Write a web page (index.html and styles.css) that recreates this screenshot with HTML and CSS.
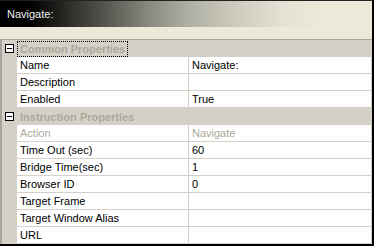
FILE: index.html
```html
<!DOCTYPE html>
<html>
<head>
<meta charset="utf-8">
<link rel="stylesheet" href="styles.css">
</head>
<body>
<div class="panel">
  <div class="header">Navigate:</div>
  <div class="band"></div>
  <div class="grid">
    <div class="cat">
      <div class="gutter"><span class="toggle"></span></div>
      <span class="cat-label focus">Common Properties</span>
    </div>
    <div class="row"><div class="gutter"></div><div class="name">Name</div><div class="value">Navigate:</div></div>
    <div class="row"><div class="gutter"></div><div class="name">Description</div><div class="value"></div></div>
    <div class="row"><div class="gutter"></div><div class="name">Enabled</div><div class="value">True</div></div>
    <div class="cat">
      <div class="gutter"><span class="toggle"></span></div>
      <span class="cat-label">Instruction Properties</span>
    </div>
    <div class="row disabled"><div class="gutter"></div><div class="name">Action</div><div class="value">Navigate</div></div>
    <div class="row"><div class="gutter"></div><div class="name">Time Out (sec)</div><div class="value">60</div></div>
    <div class="row"><div class="gutter"></div><div class="name">Bridge Time(sec)</div><div class="value">1</div></div>
    <div class="row"><div class="gutter"></div><div class="name">Browser ID</div><div class="value">0</div></div>
    <div class="row"><div class="gutter"></div><div class="name">Target Frame</div><div class="value"></div></div>
    <div class="row"><div class="gutter"></div><div class="name">Target Window Alias</div><div class="value"></div></div>
    <div class="row"><div class="gutter"></div><div class="name">URL</div><div class="value"></div></div>
  </div>
</div>
</body>
</html>
```
FILE: styles.css
```css
html, body {
  margin: 0;
  padding: 0;
  background: #000;
}
.panel {
  width: 374px;
  height: 246px;
  box-sizing: border-box;
  border-right: 2px solid #000;
  border-bottom: 2px solid #000;
  font-family: "Liberation Sans", Arial, sans-serif;
  font-size: 11px;
  background: #d4d0c8;
  overflow: hidden;
}
.header {
  height: 26px;
  border-top: 1px solid #222;
  line-height: 26px;
  padding-left: 7px;
  color: #f0f0f0;
  background: linear-gradient(to right, #000 0px, #000 30px, #4a4a44 95px, #8a8a80 150px, #b0b0a4 190px, #d2d0c2 245px, #e4e2d4 285px, #ece9d8 320px, #ece9d8 372px);
}
.band {
  height: 12px;
  background: #ece9d8;
}
.grid {
  border-top: 1px solid #aca899;
  border-left: 2px solid #a6a49c;
  background: #d4d0c8;
}
.gutter {
  width: 15px;
  flex: none;
  background: #d4d0c8;
  position: relative;
}
.cat {
  display: flex;
  height: 17px;
}
.toggle {
  position: absolute;
  left: 3px;
  top: 4px;
  width: 7px;
  height: 7px;
  border: 1px solid #000;
  background: #fff;
}
.toggle::after {
  content: "";
  position: absolute;
  left: 1px;
  top: 3px;
  width: 5px;
  height: 1px;
  background: #000;
}
.cat-label {
  margin-top: 1px;
  height: 14px;
  line-height: 14px;
  padding: 0 2px;
  border: 1px solid transparent;
  font-weight: bold;
  color: #aca899;
}
.cat-label.focus {
  border: 1px dotted #000;
}
.row {
  display: flex;
  height: 17px;
}
.name, .value {
  background: #fff;
  border-bottom: 1px solid #d4d0c8;
  height: 16px;
  line-height: 16px;
  padding-left: 3px;
  color: #000;
  white-space: nowrap;
  overflow: hidden;
}
.name {
  width: 168px;
  flex: none;
  border-right: 1px solid #d4d0c8;
}
.value {
  flex: 1;
  margin-right: 1px;
}
.disabled .name, .disabled .value {
  color: #aca899;
}
```
